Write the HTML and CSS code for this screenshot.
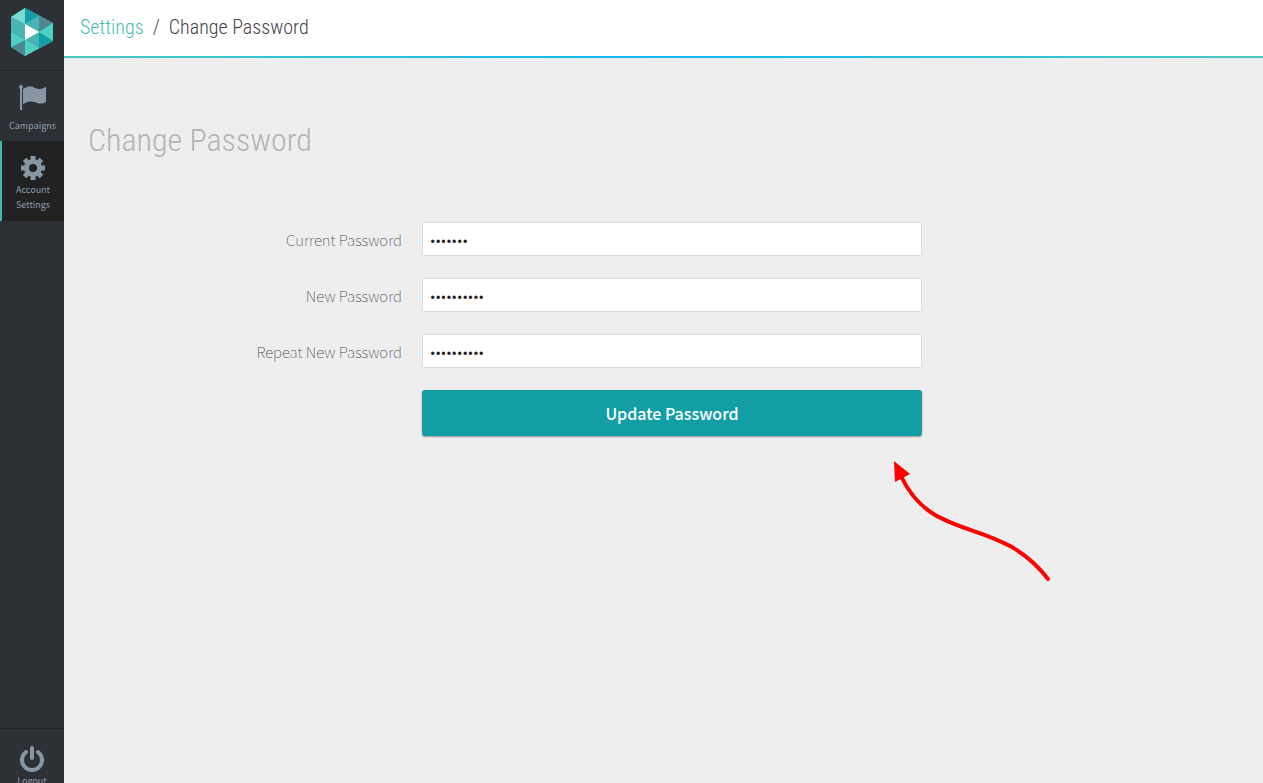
FILE: index.html
```html
<!DOCTYPE html>
<html lang="en">
<head>
<meta charset="utf-8">
<title>Change Password</title>
<link rel="stylesheet" href="styles.css">
</head>
<body>
<div class="app">
  <nav class="sidebar">
    <a class="logo" href="#" aria-label="Home">
      <svg width="42" height="48" viewBox="0 0 42 48">
        <path fill="#4ac9be" d="M14 0 42 15v18L14 48 0 39V9z"/>
        <path fill="#77dccb" d="M14 0v16L0 9z"/>
        <path fill="#129ea6" d="M14 0 28 8 14 16z"/>
        <path fill="#48b4b5" d="M28 8v16L14 16z"/>
        <path fill="#4f8795" d="M28 8 42 15 28 24z"/>
        <path fill="#4fd0c4" d="M42 15v18L28 24z"/>
        <path fill="#129ea6" d="M28 24 42 33 28 40z"/>
        <path fill="#48b4b5" d="M28 24v16L14 32z"/>
        <path fill="#4fd0c4" d="M14 32 28 40 14 48z"/>
        <path fill="#4f8795" d="M14 32v16L0 39z"/>
        <path fill="#48b4b5" d="M0 9 14 16 0 24z"/>
        <path fill="#4fd0c4" d="M0 24 14 32 0 39z"/>
        <path fill="#48b4b5" d="M0 24 14 16v16z"/>
        <path fill="#fff" d="M14 16 28 24 14 32z"/>
      </svg>
    </a>
    <a class="item campaigns" href="#">
      <svg width="28" height="26" viewBox="0 0 28 26" fill="#8796a5">
        <circle cx="2" cy="2" r="2"/><path d="M1 2h2v23H1z"/>
        <path d="M4 4C10 0 13 1 16 3c4 2 7 1 11-1v15c-4 2-7 2-11 0-4-1-7-1-12 2z"/>
      </svg>
      <span>Campaigns</span>
    </a>
    <a class="item settings" href="#">
      <svg width="24" height="24" viewBox="0 0 24 24" fill="none" stroke="#8796a5">
        <circle cx="12" cy="12" r="6.5" stroke-width="5"/>
        <path stroke-width="5" d="M12 0v5M12 19v5M0 12h5M19 12h5M3.5 3.5 7 7M17 17l3.5 3.5M20.5 3.5 17 7M7 17l-3.5 3.5"/>
      </svg>
      <span>Account<br>Settings</span>
    </a>
    <a class="item logout" href="#">
      <svg width="24" height="26" viewBox="0 0 24 26" fill="none" stroke="#8796a5" stroke-width="4" stroke-linecap="round">
        <path d="M12 2v10M6 6a10 10 0 1 0 12 0"/>
      </svg>
      <span>Logout</span>
    </a>
  </nav>
  <div class="page">
    <header class="topbar">
      <a href="#">Settings</a><span class="slash">/</span><span>Change Password</span>
    </header>
    <main class="content">
      <h1>Change Password</h1>
      <form class="form">
        <label for="current">Current Password</label>
        <input id="current" type="password" value="1234567">
        <label for="new">New Password</label>
        <input id="new" type="password" value="1234567890">
        <label for="repeat">Repeat New Password</label>
        <input id="repeat" type="password" value="1234567890">
        <button type="button">Update Password</button>
      </form>
      <svg class="arrow" width="160" height="124" viewBox="0 0 160 124">
        <path fill="none" stroke="#f00" stroke-width="4" stroke-linecap="round" d="M10 18C42 84 107 55 156 119"/>
        <path fill="#f00" d="M2 1 18 14 3 22z"/>
      </svg>
    </main>
  </div>
</div>
</body>
</html>
```
FILE: styles.css
```css
* {
  box-sizing: border-box;
}

body {
  margin: 0;
  background: #eee;
  color: #444;
  font-family: "Source Sans Pro", "Noto Sans CJK SC", sans-serif;
}

a {
  text-decoration: none;
}

.app {
  display: flex;
  height: 100vh;
  overflow: hidden;
}

.sidebar {
  display: flex;
  flex: 0 0 64px;
  flex-direction: column;
  background: #2d3135;
}

.logo {
  height: 71px;
  padding: 8px 11px;
  border-bottom: 1px solid #202224;
}

.logo svg,
.item svg {
  display: block;
  flex-shrink: 0;
}

.item {
  display: flex;
  flex-direction: column;
  align-items: center;
  color: #8f9dab;
  font-size: 9px;
  line-height: 15px;
  text-align: center;
}

.campaigns {
  height: 70px;
  padding: 14px 0 0 1px;
  gap: 7px;
}

.settings {
  height: 80px;
  padding-top: 15px;
  gap: 2px;
  border-left: 2px solid #3bb8b2;
  background: #222;
}

.logout {
  height: 55px;
  margin-top: auto;
  padding-top: 17px;
  gap: 1px;
  border-top: 1px solid #202224;
}

.page {
  flex: 1;
  min-width: 0;
}

.topbar {
  height: 58px;
  padding: 12px 16px;
  border-bottom: 2px solid;
  border-image: linear-gradient(90deg, #4ac9be, #0eb8f0 50%, #4ac9be) 1;
  background: #fff;
  font: 300 20px/30px "Roboto Condensed", Roboto, sans-serif;
}

.topbar a {
  color: #4abdb8;
}

.slash {
  margin: 0 9px;
}

.content {
  position: relative;
  padding: 58px 7px 0 24px;
}

h1 {
  margin: 0 0 58px;
  color: #b3b3b3;
  font: 300 32px/48px "Roboto Condensed", Roboto, sans-serif;
}

.form {
  display: grid;
  grid-template-columns: 1fr minmax(0, 500px) 1fr;
  gap: 22px 20px;
}

.form label {
  grid-column: 1;
  height: 34px;
  font-size: 15px;
  font-weight: 100;
  line-height: 36px;
  text-align: right;
}

.form input {
  grid-column: 2;
  width: 100%;
  height: 34px;
  padding: 4px 7px 0;
  border: 1px solid #ddd;
  border-radius: 1px;
  background: #fff;
  color: #222;
  font: 16px Roboto, sans-serif;
}

.form button {
  grid-column: 2;
  height: 46px;
  border: 0;
  border-radius: 3px;
  background: #139ea6;
  box-shadow: 0 1px 2px #999;
  color: #fff;
  font: 500 16px "Noto Sans CJK SC", sans-serif;
}

.arrow {
  position: absolute;
  top: 402px;
  left: 828px;
}
```
